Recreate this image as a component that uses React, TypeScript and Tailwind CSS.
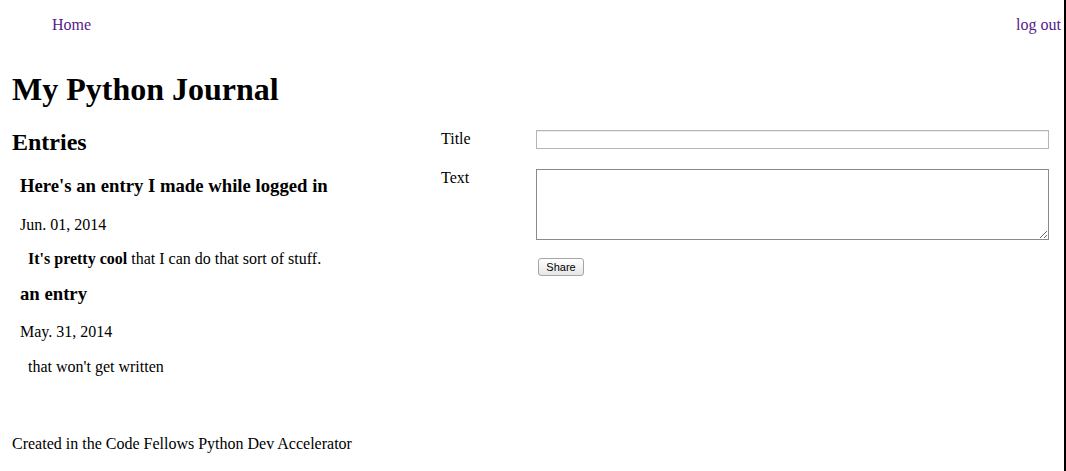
import React from "react";

const entries = [
  {
    title: "Here's an entry I made while logged in",
    date: "Jun. 01, 2014",
    body: (
      <>
        <strong>It's pretty cool</strong> that I can do that sort of stuff.
      </>
    ),
  },
  {
    title: "an entry",
    date: "May. 31, 2014",
    body: <>that won't get written</>,
  },
];

export default function App() {
  return (
    <div className="flex w-[1066px] h-[471px] bg-white text-black font-['Liberation_Serif',serif] text-[16px] leading-[20px] overflow-hidden">
      <div className="w-[1064px] flex flex-col">
        {/* nav */}
        <nav className="flex justify-between pt-[15px] pl-[52px] pr-[3px]">
          <a href="#" className="text-[#551a8b]">
            Home
          </a>
          <a href="#" className="text-[#551a8b]">
            log out
          </a>
        </nav>

        <h1 className="mt-[34px] pl-3 text-[32px] leading-[40px] font-bold">
          My Python Journal
        </h1>

        <div className="flex">
          {/* entries */}
          <section className="w-[441px] pl-3 pt-[18px]">
            <h2 className="text-[24px] leading-[30px] font-bold">Entries</h2>
            <div className="flex flex-col">
              {entries.map((e, i) => (
                <article key={i} className={i === 0 ? "mt-[17px]" : "mt-[13px]"}>
                  <h3 className="pl-2 text-[18.72px] leading-[24px] font-bold">
                    {e.title}
                  </h3>
                  <p className={i === 0 ? "pl-2 mt-[17px]" : "pl-2 mt-[16px]"}>{e.date}</p>
                  <p className={i === 0 ? "pl-4 mt-[14px]" : "pl-4 mt-[15px]"}>{e.body}</p>
                </article>
              ))}
            </div>
          </section>

          {/* new entry form */}
          <form className="flex-1 pt-[20px] pr-[15px]">
            <div className="flex items-start">
              <label className="w-[95px]">Title</label>
              <input
                type="text"
                className="flex-1 mt-[1px] h-[19px] border border-[#b5b5b5] shadow-[inset_0_1px_1px_rgba(0,0,0,0.08)] outline-none"
              />
            </div>
            <div className="flex items-start mt-[19px]">
              <label className="w-[95px]">Text</label>
              <textarea className="flex-1 mt-[1px] h-[71px] border border-[#8a8a8a] outline-none resize" />
            </div>
            <div className="pl-[97px] mt-[16px]">
              <button
                type="button"
                className="w-[46px] h-[18px] rounded-[3px] border border-[#a6a6a6] bg-gradient-to-b from-white to-[#e6e6e6] font-['Liberation_Sans',sans-serif] text-[11px] leading-[16px] text-black"
              >
                Share
              </button>
            </div>
          </form>
        </div>

        <footer className="mt-auto mb-[17px] pl-3">
          Created in the Code Fellows Python Dev Accelerator
        </footer>
      </div>
      <div className="w-[2px] h-full bg-black" />
    </div>
  );
}
